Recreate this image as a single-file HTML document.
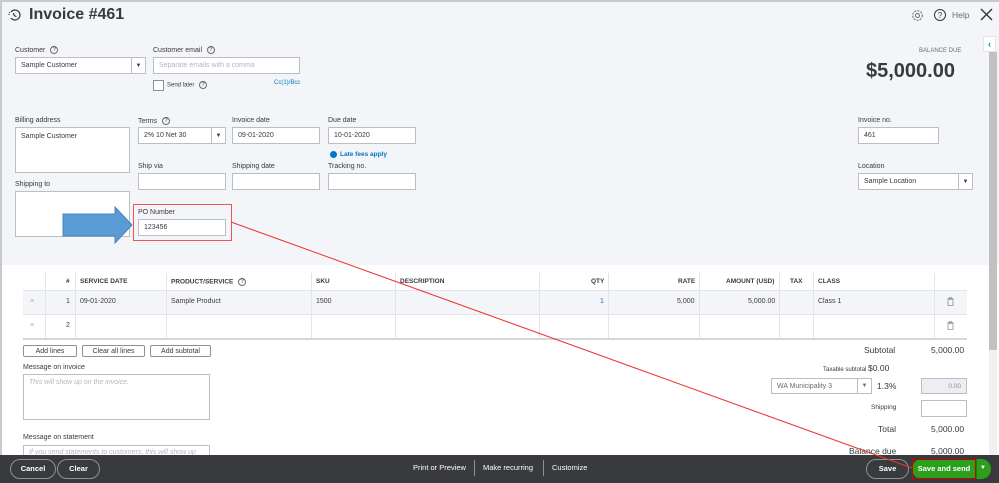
<!DOCTYPE html>
<html><head><meta charset="utf-8"><style>
*{margin:0;padding:0;box-sizing:border-box}
body{width:999px;height:483px;overflow:hidden;font-family:"Liberation Sans",sans-serif;color:#393a3d;background:#fff;position:relative}
.a{position:absolute}
.top{left:0;top:0;width:999px;height:265px;background:#f4f5f8;border-top:2px solid #c9cacc}
.lbl{font-size:7px;color:#393a3d}
.in{background:#fff;border:1px solid #babec5;font-size:7px;padding:0 5px;display:flex;align-items:center;color:#393a3d}
.dd{position:absolute;right:0;top:0;bottom:0;width:14px;border-left:1px solid #babec5;font-size:6px;display:flex;align-items:center;justify-content:center}
.q{display:inline-block;width:8px;height:8px;border:1px solid #6b6c72;border-radius:50%;font-size:6px;text-align:center;line-height:7px;vertical-align:middle;margin-left:3px}
.th{font-size:6.5px;font-weight:bold;color:#393a3d}
.vl{width:1px;background:#e3e5e8}
.btn{border:1px solid #8d9096;border-radius:2px;background:#fff;font-size:7px;height:12px;display:flex;align-items:center;justify-content:center}
</style></head><body>
<div class="a top"></div>
<div class="a" style="left:0;top:0;width:2px;height:455px;background:#c9cacc"></div>
<!-- header -->
<svg class="a" style="left:8px;top:8px" width="14" height="14" viewBox="0 0 14 14"><path d="M3 4 A5 5 0 1 1 3 10" fill="none" stroke="#393a3d" stroke-width="1.2"/><path d="M1 7 A6 6 0 0 1 2.2 3.5" fill="none" stroke="#393a3d" stroke-width="1.2" stroke-dasharray="1 1"/><path d="M5.5 5 q0 3 3 3.5" fill="none" stroke="#393a3d" stroke-width="1.2"/></svg>
<div class="a" style="left:29px;top:6px;font-size:16px;font-weight:bold">Invoice #461</div>
<svg class="a" style="left:911px;top:9px" width="13" height="13" viewBox="0 0 13 13"><circle cx="6.5" cy="6.5" r="2" fill="none" stroke="#6b6c72"/><circle cx="6.5" cy="6.5" r="4.8" fill="none" stroke="#6b6c72" stroke-dasharray="2 1.2"/></svg>
<div class="a" style="left:934px;top:9px;width:12px;height:12px;border:1px solid #393a3d;border-radius:50%;font-size:8px;text-align:center;line-height:11px">?</div>
<div class="a" style="left:952px;top:10px;font-size:8.5px;color:#6b6c72">Help</div>
<svg class="a" style="left:980px;top:8px" width="13" height="13"><path d="M1 1L12 12M12 1L1 12" stroke="#393a3d" stroke-width="1.5"/></svg>
<div class="a" style="left:983px;top:36px;width:13px;height:16px;background:#fff;border:1px solid #e3e5e8;color:#0077c5;font-size:9px;font-weight:bold;text-align:center;line-height:14px">‹</div>
<div class="a" style="left:989px;top:52px;width:8px;height:298px;background:#c1c1c1"></div>
<div class="a" style="left:989px;top:350px;width:8px;height:105px;background:#f1f1f1"></div>
<!-- customer -->
<div class="a lbl" style="left:15px;top:46px">Customer <span class="q">?</span></div>
<div class="a in" style="left:15px;top:57px;width:131px;height:17px">Sample Customer<div class="dd">▼</div></div>
<div class="a lbl" style="left:153px;top:46px">Customer email <span class="q">?</span></div>
<div class="a in" style="left:153px;top:57px;width:147px;height:17px;color:#b4b7bc">Separate emails with a comma</div>
<div class="a" style="left:153px;top:80px;width:11px;height:11px;border:1px solid #8d9096;background:#fff"></div>
<div class="a lbl" style="left:167px;top:81px;font-size:6px">Send later <span class="q">?</span></div>
<div class="a" style="left:274px;top:80px;font-size:6px;color:#0077c5">Cc(1)/Bcc</div>
<div class="a" style="left:919px;top:48px;font-size:6px;color:#6b6c72">BALANCE DUE</div>
<div class="a" style="left:866px;top:60px;font-size:20px;font-weight:bold">$5,000.00</div>
<!-- billing -->
<div class="a lbl" style="left:15px;top:117px">Billing address</div>
<div class="a in" style="left:15px;top:127px;width:115px;height:46px;align-items:flex-start;padding-top:5px">Sample Customer</div>
<div class="a lbl" style="left:15px;top:181px">Shipping to</div>
<div class="a in" style="left:15px;top:191px;width:115px;height:46px"></div>
<div class="a lbl" style="left:138px;top:117px">Terms <span class="q">?</span></div>
<div class="a in" style="left:138px;top:127px;width:88px;height:17px">2% 10 Net 30<div class="dd">▼</div></div>
<div class="a lbl" style="left:232px;top:117px">Invoice date</div>
<div class="a in" style="left:232px;top:127px;width:88px;height:17px">09-01-2020</div>
<div class="a lbl" style="left:328px;top:117px">Due date</div>
<div class="a in" style="left:328px;top:127px;width:88px;height:17px">10-01-2020</div>
<div class="a" style="left:330px;top:151px;width:7px;height:7px;border-radius:50%;background:#0077c5"></div>
<div class="a" style="left:340px;top:151px;font-size:6.5px;color:#0077c5;font-weight:bold">Late fees apply</div>
<div class="a lbl" style="left:138px;top:163px">Ship via</div>
<div class="a in" style="left:138px;top:173px;width:88px;height:17px"></div>
<div class="a lbl" style="left:232px;top:163px">Shipping date</div>
<div class="a in" style="left:232px;top:173px;width:88px;height:17px"></div>
<div class="a lbl" style="left:328px;top:163px">Tracking no.</div>
<div class="a in" style="left:328px;top:173px;width:88px;height:17px"></div>
<div class="a" style="left:133px;top:204px;width:99px;height:37px;border:1px solid #e55"></div>
<div class="a lbl" style="left:138px;top:209px">PO Number</div>
<div class="a in" style="left:138px;top:219px;width:88px;height:17px">123456</div>
<div class="a lbl" style="left:858px;top:117px">Invoice no.</div>
<div class="a in" style="left:858px;top:127px;width:81px;height:17px">461</div>
<div class="a lbl" style="left:858px;top:163px">Location</div>
<div class="a in" style="left:858px;top:173px;width:115px;height:17px">Sample Location<div class="dd">▼</div></div>
<svg class="a" style="left:62px;top:206px" width="72" height="38"><path d="M1 8H53V1L70 19L53 37V30H1Z" fill="#5b9bd5" stroke="#4a84b8"/></svg>
<!-- table -->
<div class="a" style="left:23px;top:290px;width:944px;height:24px;background:#f4f5f8"></div>
<div class="a" style="left:23px;top:290px;width:944px;height:1px;background:#e3e5e8"></div>
<div class="a" style="left:23px;top:314px;width:944px;height:1px;background:#e3e5e8"></div>
<div class="a" style="left:23px;top:338px;width:944px;height:2px;background:#d4d7dc"></div>
<div class="a vl" style="left:45px;top:273px;height:65px"></div>
<div class="a vl" style="left:75px;top:273px;height:65px"></div>
<div class="a vl" style="left:166px;top:273px;height:65px"></div>
<div class="a vl" style="left:311px;top:273px;height:65px"></div>
<div class="a vl" style="left:395px;top:273px;height:65px"></div>
<div class="a vl" style="left:539px;top:273px;height:65px"></div>
<div class="a vl" style="left:608px;top:273px;height:65px"></div>
<div class="a vl" style="left:699px;top:273px;height:65px"></div>
<div class="a vl" style="left:779px;top:273px;height:65px"></div>
<div class="a vl" style="left:813px;top:273px;height:65px"></div>
<div class="a vl" style="left:934px;top:273px;height:65px"></div>
<div class="a th" style="left:66px;top:278px">#</div>
<div class="a th" style="left:80px;top:278px">SERVICE DATE</div>
<div class="a th" style="left:171px;top:278px">PRODUCT/SERVICE <span class="q" style="font-weight:normal">?</span></div>
<div class="a th" style="left:316px;top:278px">SKU</div>
<div class="a th" style="left:400px;top:278px">DESCRIPTION</div>
<div class="a th" style="left:591px;top:278px">QTY</div>
<div class="a th" style="left:678px;top:278px">RATE</div>
<div class="a th" style="left:726px;top:278px">AMOUNT (USD)</div>
<div class="a th" style="left:790px;top:278px">TAX</div>
<div class="a th" style="left:818px;top:278px">CLASS</div>
<div class="a" style="left:30px;top:298px;font-size:7px;color:#b4b7bc">≡</div>
<div class="a" style="left:30px;top:322px;font-size:7px;color:#b4b7bc">≡</div>
<div class="a lbl" style="left:66px;top:298px">1</div>
<div class="a lbl" style="left:66px;top:322px">2</div>
<div class="a lbl" style="left:80px;top:298px">09-01-2020</div>
<div class="a lbl" style="left:171px;top:298px">Sample Product</div>
<div class="a lbl" style="left:316px;top:298px">1500</div>
<div class="a lbl" style="left:600px;top:298px;color:#0077c5">1</div>
<div class="a lbl" style="left:677px;top:298px">5,000</div>
<div class="a lbl" style="left:748px;top:298px">5,000.00</div>
<div class="a lbl" style="left:818px;top:298px">Class 1</div>
<svg class="a" style="left:947px;top:297px" width="7" height="9"><path d="M0.5 1.5H6.5M2.5 1.5V0.5H4.5V1.5M1 2.5H6V8.5H1Z" fill="none" stroke="#8d9096" stroke-width="0.8"/></svg>
<svg class="a" style="left:947px;top:321px" width="7" height="9"><path d="M0.5 1.5H6.5M2.5 1.5V0.5H4.5V1.5M1 2.5H6V8.5H1Z" fill="none" stroke="#8d9096" stroke-width="0.8"/></svg>
<div class="a btn" style="left:23px;top:345px;width:54px">Add lines</div>
<div class="a btn" style="left:82px;top:345px;width:63px">Clear all lines</div>
<div class="a btn" style="left:150px;top:345px;width:61px">Add subtotal</div>
<div class="a lbl" style="left:23px;top:364px">Message on invoice</div>
<div class="a in" style="left:23px;top:374px;width:187px;height:46px;align-items:flex-start;padding-top:4px;color:#b4b7bc;font-style:italic">This will show up on the invoice.</div>
<div class="a lbl" style="left:23px;top:434px">Message on statement</div>
<div class="a in" style="left:23px;top:445px;width:187px;height:12px;align-items:flex-start;padding-top:3px;color:#b4b7bc;font-style:italic;overflow:hidden">If you send statements to customers, this will show up as</div>
<!-- totals -->
<div class="a" style="left:864px;top:345px;font-size:8.5px">Subtotal</div>
<div class="a" style="left:931px;top:345px;font-size:8.5px">5,000.00</div>
<div class="a" style="left:823px;top:363px;font-size:6px">Taxable subtotal <span style="font-size:8.5px">$0.00</span></div>
<div class="a in" style="left:771px;top:378px;width:101px;height:16px;color:#6b6c72">WA Municipality 3<div class="dd">▼</div></div>
<div class="a" style="left:877px;top:381px;font-size:8.5px">1.3%</div>
<div class="a in" style="left:921px;top:378px;width:46px;height:16px;background:#eceef1;justify-content:flex-end;color:#8d9096;font-size:6.5px">0.00</div>
<div class="a" style="left:871px;top:404px;font-size:6.5px">Shipping</div>
<div class="a in" style="left:921px;top:400px;width:46px;height:17px"></div>
<div class="a" style="left:878px;top:424px;font-size:8.5px">Total</div>
<div class="a" style="left:931px;top:424px;font-size:8.5px">5,000.00</div>
<div class="a" style="left:849px;top:446px;font-size:8.5px">Balance due</div>
<div class="a" style="left:931px;top:446px;font-size:8.5px">5,000.00</div>
<!-- footer -->
<div class="a" style="left:0;top:455px;width:999px;height:28px;background:#393a3d"></div>
<div class="a" style="left:10px;top:459px;width:46px;height:20px;border:1px solid #8d9096;border-radius:10px;color:#fff;font-size:7.5px;font-weight:bold;text-align:center;line-height:18px">Cancel</div>
<div class="a" style="left:57px;top:459px;width:43px;height:20px;border:1px solid #8d9096;border-radius:10px;color:#fff;font-size:7.5px;font-weight:bold;text-align:center;line-height:18px">Clear</div>
<div class="a" style="left:413px;top:463px;font-size:7.5px;color:#fff">Print or Preview</div>
<div class="a" style="left:474px;top:460px;width:1px;height:16px;background:#8d9096"></div>
<div class="a" style="left:483px;top:463px;font-size:7.5px;color:#fff">Make recurring</div>
<div class="a" style="left:543px;top:460px;width:1px;height:16px;background:#8d9096"></div>
<div class="a" style="left:552px;top:463px;font-size:7.5px;color:#fff">Customize</div>
<div class="a" style="left:866px;top:459px;width:43px;height:20px;border:1px solid #8d9096;border-radius:10px;color:#fff;font-size:7.5px;font-weight:bold;text-align:center;line-height:18px">Save</div>
<div class="a" style="left:912px;top:459px;width:79px;height:20px;background:#2ca01c;border-radius:10px"></div>
<div class="a" style="left:976px;top:459px;width:1px;height:20px;background:#1f7a12"></div>
<div class="a" style="left:912px;top:459px;width:64px;height:20px;border:1px solid #c00;color:#fff;font-size:7.5px;font-weight:bold;text-align:center;line-height:18px">Save and send</div>
<div class="a" style="left:980px;top:465px;color:#fff;font-size:6px">▼</div>
<!-- red line -->
<svg class="a" style="left:0;top:0" width="999" height="483"><line x1="231" y1="222" x2="912" y2="468" stroke="#e33" stroke-width="1"/></svg>
</body></html>
